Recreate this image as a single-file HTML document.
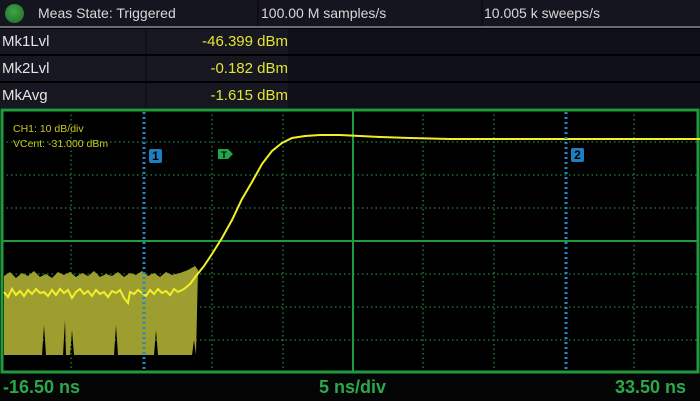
<!DOCTYPE html>
<html><head><meta charset="utf-8"><style>
body{margin:0;width:700px;height:401px;background:#000;overflow:hidden;font-family:"Liberation Sans",sans-serif;position:relative}
.hdr{position:absolute;left:0;top:0;width:700px;height:26px;background:#15151f;border-bottom:2px solid #6a6a72}
.hdr div{position:absolute;top:0;height:26px;line-height:26px;color:#d8d8d8;font-size:14px}
.sep{position:absolute;top:0;width:2px;height:26px;background:#0c0c12}
.row{position:absolute;left:0;width:700px;height:25px;background:#10101a}
.row .l{position:absolute;left:2px;top:0;line-height:25px;font-size:15px;color:#e4e4e4}
.row .v{position:absolute;left:147px;width:141px;top:0;line-height:25px;text-align:right;font-size:15px;color:#e4e436;background:#171721}
.row .c1{position:absolute;left:0;width:145px;height:25px;background:#171721}
.ft{position:absolute;top:374px;height:27px;width:700px;background:#050505}
.ft div{position:absolute;top:3px;font-size:18px;font-weight:bold;color:#2aa84a}
</style></head><body>
<div class="hdr">
<div style="left:5px;top:4px;width:19px;height:19px;border-radius:50%;background:radial-gradient(circle at 45% 40%,#3fa446,#1c6a26)"></div>
<div style="left:38px">Meas State: Triggered</div>
<span class="sep" style="left:257px"></span>
<div style="left:261px">100.00 M samples/s</div>
<span class="sep" style="left:481px"></span>
<div style="left:484px">10.005 k sweeps/s</div>
</div>
<div class="row" style="top:29px"><span class="c1"></span><span class="l">Mk1Lvl</span><span class="v">-46.399 dBm</span></div>
<div class="row" style="top:56px"><span class="c1"></span><span class="l">Mk2Lvl</span><span class="v">-0.182 dBm</span></div>
<div class="row" style="top:83px"><span class="c1"></span><span class="l">MkAvg</span><span class="v">-1.615 dBm</span></div>
<svg style="position:absolute;left:0;top:108px" width="700" height="266" viewBox="0 108 700 266">
<rect x="0" y="108" width="700" height="266" fill="#000"/>
<g stroke="#1f8a3a" stroke-width="1.3" stroke-dasharray="1.5,3">
<line x1="71" y1="110" x2="71" y2="372"/><line x1="212" y1="110" x2="212" y2="372"/><line x1="283" y1="110" x2="283" y2="372"/>
<line x1="423" y1="110" x2="423" y2="372"/><line x1="494" y1="110" x2="494" y2="372"/><line x1="634" y1="110" x2="634" y2="372"/>
<line x1="2" y1="142" x2="698" y2="142"/><line x1="2" y1="175" x2="698" y2="175"/><line x1="2" y1="208" x2="698" y2="208"/>
<line x1="2" y1="274" x2="698" y2="274"/><line x1="2" y1="307" x2="698" y2="307"/><line x1="2" y1="340" x2="698" y2="340"/>
</g>
<g stroke="#1f9a3e" stroke-width="2" fill="none">
<rect x="2" y="110" width="696" height="262" stroke-width="3"/>
<line x1="353" y1="110" x2="353" y2="372"/><line x1="2" y1="241" x2="698" y2="241"/>
</g>
<polygon fill="#9e9e30" points="4,276 10,272 16,278 22,273 28,276 34,271 40,277 46,274 52,278 58,272 64,275 70,272 76,277 82,273 88,276 94,271 100,277 106,274 112,276 118,272 124,277 130,273 136,275 142,271 148,276 154,273 160,277 166,272 172,275 180,273 188,270 195,266 198,270 196,355 194,340 192,355 158,355 156,330 154,355 118,355 116,325 114,355 74,355 72,330 70,355 66,355 65,320 63,355 46,355 44,325 42,355 4,355"/>
<polyline fill="none" stroke="#f0f028" stroke-width="2" points="4,292 8,297 12,289 16,295 20,291 24,296 28,290 32,294 36,289 40,293 44,292 48,296 52,290 56,295 60,289 64,293 68,290 72,298 76,292 80,289 84,294 88,291 92,296 96,290 100,294 104,292 108,297 112,291 116,293 120,290 124,298 128,303 130,292 134,294 138,290 142,293 146,296 150,290 154,294 158,289 162,293 166,291 170,295 174,289 178,292 184,289 190,284 196,276 204,266 212,254 222,238 232,220 242,199 252,182 262,164 272,151 282,143 292,138 305,136 320,135 340,135 360,136 380,137 410,138 450,139 700,139"/>
<g stroke="#1e88d0" stroke-width="3" stroke-dasharray="2,3">
<line x1="144" y1="112" x2="144" y2="372"/><line x1="566" y1="112" x2="566" y2="372"/>
</g>
<rect x="149" y="149" width="13" height="14" rx="2" fill="#1e7ec0"/>
<text x="155.5" y="160" font-size="12" font-weight="bold" fill="#000" text-anchor="middle" font-family="Liberation Sans">1</text>
<rect x="571" y="148" width="13" height="14" rx="2" fill="#1e7ec0"/>
<text x="577.5" y="159" font-size="12" font-weight="bold" fill="#000" text-anchor="middle" font-family="Liberation Sans">2</text>
<polygon points="218,149 228,149 233,154 228,159 218,159" fill="#1fa84a"/>
<text x="224" y="158" font-size="9" font-weight="bold" fill="#000" text-anchor="middle" font-family="Liberation Sans">T</text>
<text x="13" y="132" font-size="10.5" fill="#c8c820" font-family="Liberation Sans">CH1: 10 dB/div</text>
<text x="13" y="147" font-size="10.5" fill="#c8c820" font-family="Liberation Sans">VCent: -31.000 dBm</text>
</svg>
<div class="ft"><div style="left:3px">-16.50 ns</div><div style="left:319px">5 ns/div</div><div style="left:615px">33.50 ns</div></div>
</body></html>
